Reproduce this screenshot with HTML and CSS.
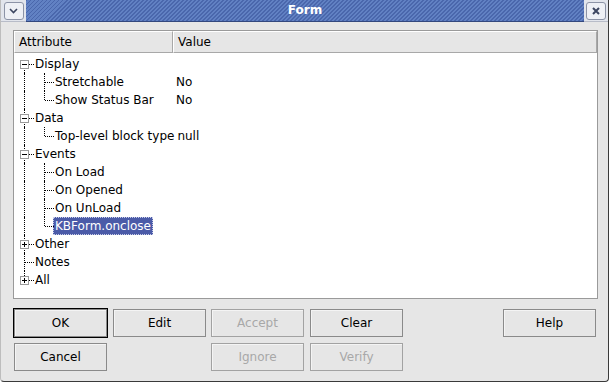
FILE: index.html
```html
<!DOCTYPE html>
<html lang="en">
<head>
    <meta charset="UTF-8">
    <title>Form</title>
    <link rel="stylesheet" href="styles.css">
</head>
<body>

<div class="window">
    <div class="titlebar">
        <div class="corner">
            <span class="tbtn">
                <svg width="11" height="8" viewBox="0 0 11 8"><path d="M2 2 L5.5 5.5 L9 2" fill="none" stroke="#3c4660" stroke-width="1.6"/></svg>
            </span>
        </div>
        <div class="caption">Form</div>
        <div class="corner right">
            <span class="tbtn">
                <svg width="10" height="10" viewBox="0 0 10 10"><path d="M2 2 L8 8 M8 2 L2 8" fill="none" stroke="#3c4660" stroke-width="2"/></svg>
            </span>
        </div>
    </div>

    <div class="content">
        <div class="table">
            <div class="header">
                <div class="hcell attr">Attribute</div>
                <div class="hcell">Value</div>
            </div>
            <div class="tree">
                <div class="row">
                    <div class="name"><span class="branch top"><span class="box minus"></span></span><span class="label">Display</span></div>
                </div>
                <div class="row">
                    <div class="name"><span class="pipe"></span><span class="branch"></span><span class="label">Stretchable</span></div>
                    <span class="value">No</span>
                </div>
                <div class="row">
                    <div class="name"><span class="pipe"></span><span class="branch last"></span><span class="label">Show Status Bar</span></div>
                    <span class="value">No</span>
                </div>
                <div class="row">
                    <div class="name"><span class="branch"><span class="box minus"></span></span><span class="label">Data</span></div>
                </div>
                <div class="row">
                    <div class="name"><span class="pipe"></span><span class="branch last"></span><span class="label">Top-level block type</span></div>
                    <span class="value">null</span>
                </div>
                <div class="row">
                    <div class="name"><span class="branch"><span class="box minus"></span></span><span class="label">Events</span></div>
                </div>
                <div class="row">
                    <div class="name"><span class="pipe"></span><span class="branch"></span><span class="label">On Load</span></div>
                </div>
                <div class="row">
                    <div class="name"><span class="pipe"></span><span class="branch"></span><span class="label">On Opened</span></div>
                </div>
                <div class="row">
                    <div class="name"><span class="pipe"></span><span class="branch"></span><span class="label">On UnLoad</span></div>
                </div>
                <div class="row">
                    <div class="name"><span class="pipe"></span><span class="branch last"></span><span class="label selected">KBForm.onclose</span></div>
                </div>
                <div class="row">
                    <div class="name"><span class="branch"><span class="box plus"></span></span><span class="label">Other</span></div>
                </div>
                <div class="row">
                    <div class="name"><span class="branch"></span><span class="label">Notes</span></div>
                </div>
                <div class="row">
                    <div class="name"><span class="branch last"><span class="box plus"></span></span><span class="label">All</span></div>
                </div>
            </div>
        </div>

        <div class="buttons">
            <button class="btn default">OK</button>
            <button class="btn">Edit</button>
            <button class="btn" disabled>Accept</button>
            <button class="btn">Clear</button>
            <button class="btn">Help</button>
            <button class="btn">Cancel</button>
            <span></span>
            <button class="btn" disabled>Ignore</button>
            <button class="btn" disabled>Verify</button>
        </div>
    </div>
</div>

</body>
</html>
```

FILE: styles.css
```css
body {
    margin: 0;
    background-color: #ffffff;
    font-family: "DejaVu Sans", Verdana, sans-serif;
    font-size: 12px;
    color: #000000;
}
.window {
    width: 609px;
    height: 382px;
    box-sizing: border-box;
    background-color: #e6e6e6;
    border-right: 1px solid #3a3a3a;
    border-bottom: 1px solid #3a3a3a;
    border-left: 1px solid #bdbdbd;
    border-radius: 0 0 4px 4px;
}
.titlebar {
    display: flex;
    height: 22px;
}
.corner {
    width: 25px;
    display: flex;
    align-items: center;
    justify-content: center;
    background-color: #e2e5ec;
    border-bottom: 1px solid #b8bcc8;
    box-sizing: border-box;
}
.corner.right {
    width: 24px;
}
.tbtn {
    width: 18px;
    height: 16px;
    border: 1px solid #8c93a6;
    border-radius: 3px;
    background-color: #eef0f5;
    display: flex;
    align-items: center;
    justify-content: center;
}
.caption {
    flex: 1;
    color: #ffffff;
    font-weight: bold;
    text-align: center;
    line-height: 21px;
    background-color: #4d6bb0;
    background-image: repeating-linear-gradient(135deg, #4a67ac 0 1.4px, #6181c3 1.4px 2.83px);
    border-bottom: 1px solid #33487e;
}
.content {
    padding: 8px 0 0 12px;
}
.table {
    width: 585px;
    height: 269px;
    border: 1px solid #9a9a9a;
    box-sizing: border-box;
    background-color: #ffffff;
}
.header {
    display: flex;
    height: 22px;
    background-color: #e6e6e6;
}
.hcell {
    flex: 1;
    padding-left: 4px;
    line-height: 20px;
    border: 1px solid #a8a8a8;
    border-top-color: #ffffff;
    border-left-color: #ffffff;
}
.hcell.attr {
    flex: none;
    width: 153px;
}
.tree {
    padding-top: 2px;
}
.row {
    display: flex;
    height: 18px;
    line-height: 18px;
}
.name {
    display: flex;
    min-width: 159px;
    white-space: nowrap;
}
.pipe, .branch {
    width: 20px;
    height: 18px;
    position: relative;
    flex: none;
}
.pipe::before, .branch::before {
    content: "";
    position: absolute;
    left: 10px;
    top: 0;
    height: 18px;
    border-left: 1px dotted #000000;
}
.branch.top::before {
    top: 9px;
    height: 9px;
}
.branch.last::before {
    height: 9px;
}
.branch::after {
    content: "";
    position: absolute;
    left: 11px;
    top: 9px;
    width: 9px;
    border-top: 1px dotted #000000;
}
.box {
    position: absolute;
    left: 6px;
    top: 5px;
    width: 7px;
    height: 7px;
    border: 1px solid #9a9a9a;
    background-color: #ffffff;
    z-index: 1;
}
.box::before {
    content: "";
    position: absolute;
    left: 1px;
    top: 3px;
    width: 5px;
    height: 1px;
    background-color: #000000;
}
.box.plus::after {
    content: "";
    position: absolute;
    left: 3px;
    top: 1px;
    width: 1px;
    height: 5px;
    background-color: #000000;
}
.label {
    margin: 0 -2px 0 -1px;
    padding: 0 2px;
}
.label.selected {
    background-color: #4b5ba8;
    color: #ffffff;
    outline: 1px dotted #c8cde8;
    outline-offset: -1px;
}
.value {
    padding-left: 3px;
}
.buttons {
    display: grid;
    grid-template-columns: 99px 98px 99px 193px 93px;
    grid-auto-rows: 28px;
    row-gap: 6px;
    margin-top: 10px;
    margin-left: 1px;
}
.btn {
    width: 93px;
    height: 28px;
    font-family: "DejaVu Sans", Verdana, sans-serif;
    font-size: 12px;
    color: #000000;
    background-color: #e6e6e6;
    border: 1px solid #8a8a8a;
    box-shadow: inset 1px 1px 0 #f4f4f4;
    padding: 0;
}
.btn.default {
    outline: 1px solid #000000;
}
.btn:disabled {
    color: #a8a8a8;
    border-color: #a2a2a2;
}
```
